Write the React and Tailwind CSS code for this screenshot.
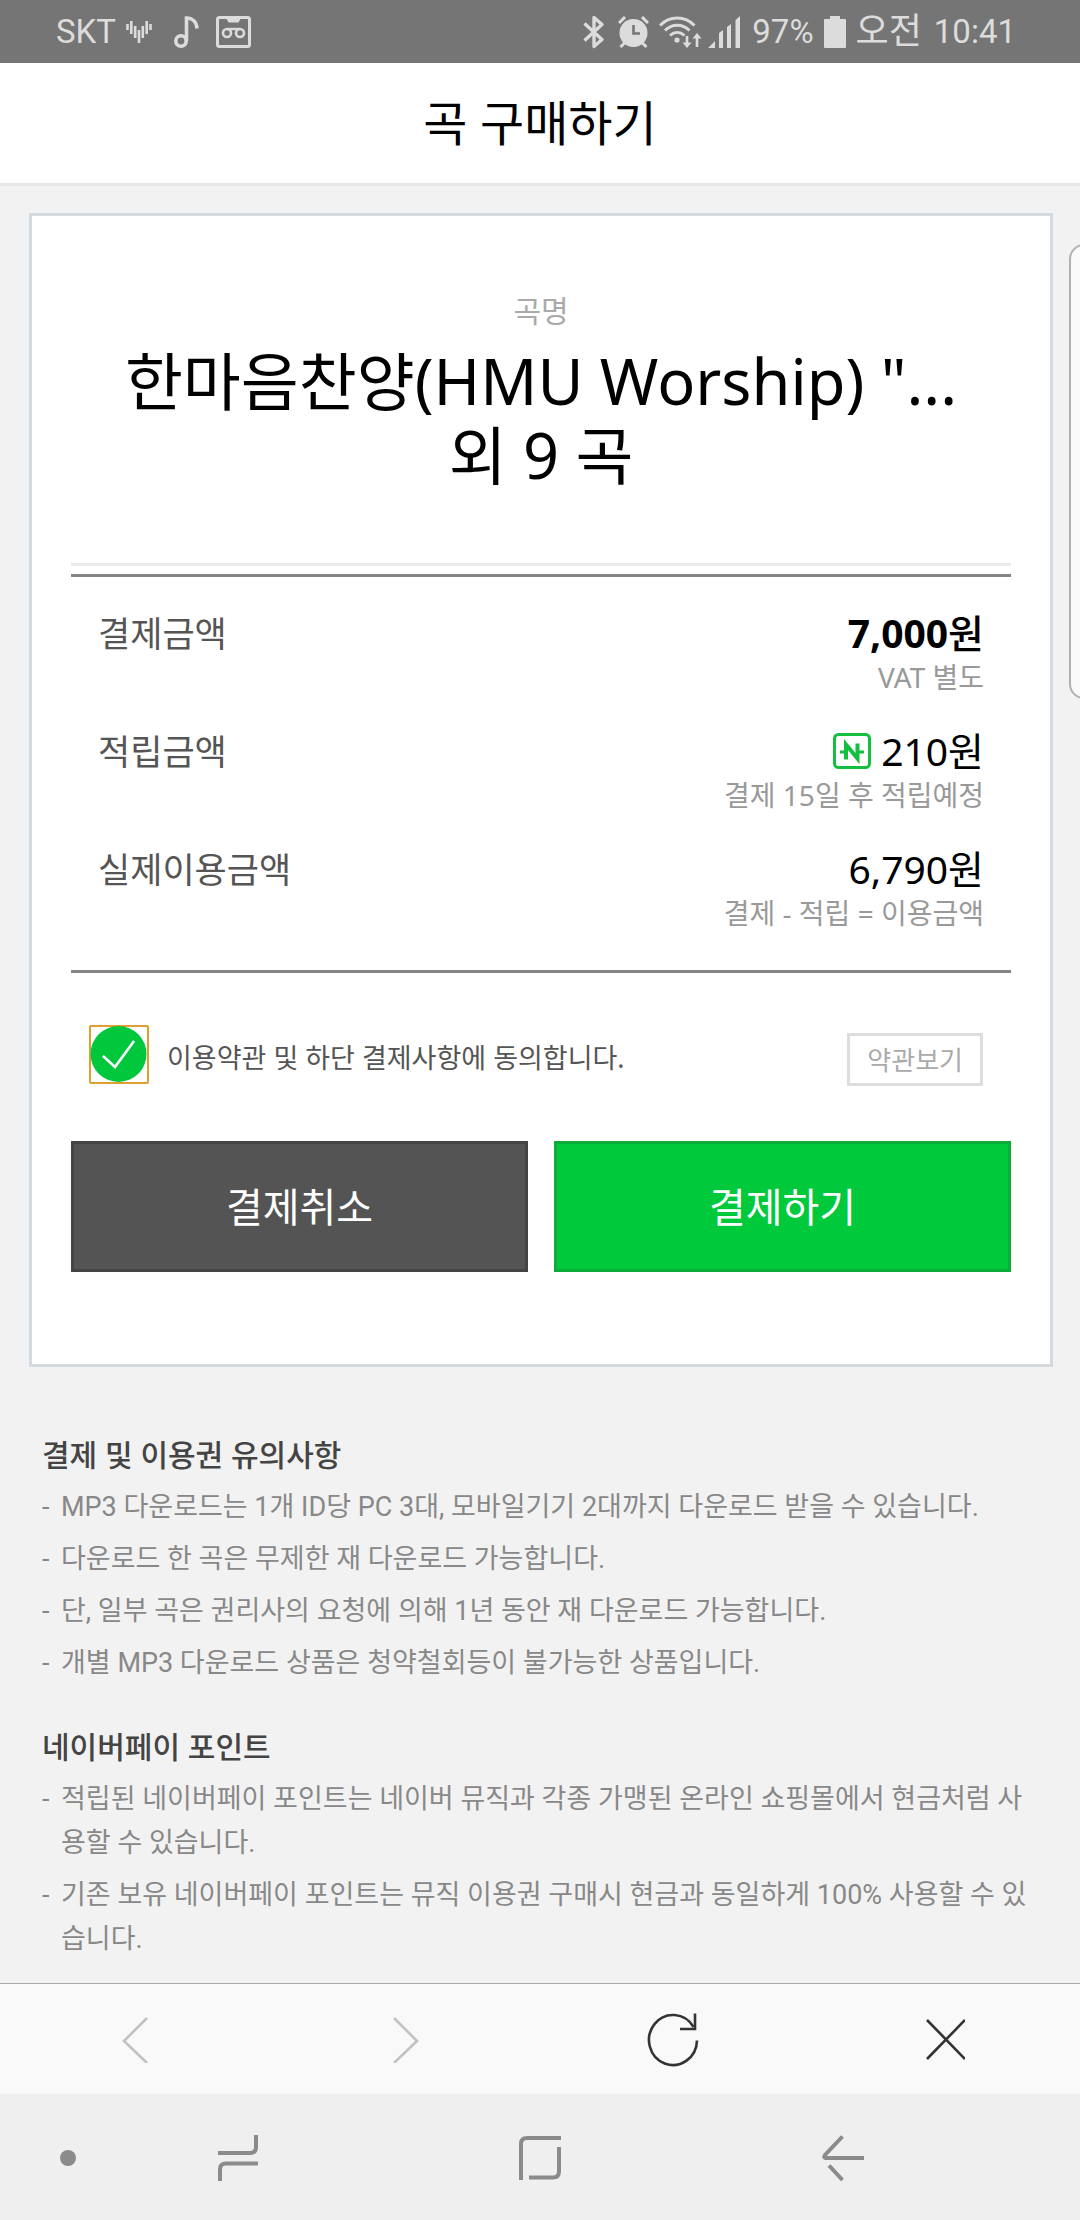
import React, { useState } from 'react';

const paymentRows = [
  { label: '결제금액', amount: '7,000', note: 'VAT 별도', bold: true },
  { label: '적립금액', amount: '210', note: '결제 15일 후 적립예정', pay: true },
  { label: '실제이용금액', amount: '6,790', note: '결제 - 적립 = 이용금액' }
];

const noticeSections = [
  {
    title: '결제 및 이용권 유의사항',
    items: [
      'MP3 다운로드는 1개 ID당 PC 3대, 모바일기기 2대까지 다운로드 받을 수 있습니다.',
      '다운로드 한 곡은 무제한 재 다운로드 가능합니다.',
      '단, 일부 곡은 권리사의 요청에 의해 1년 동안 재 다운로드 가능합니다.',
      '개별 MP3 다운로드 상품은 청약철회등이 불가능한 상품입니다.'
    ]
  },
  {
    title: '네이버페이 포인트',
    items: [
      '적립된 네이버페이 포인트는 네이버 뮤직과 각종 가맹된 온라인 쇼핑몰에서 현금처럼 사용할 수 있습니다.',
      '기존 보유 네이버페이 포인트는 뮤직 이용권 구매시 현금과 동일하게 100% 사용할 수 있습니다.'
    ]
  }
];

const StatusBar = () => (
  <div className="flex h-[63px] items-center justify-between bg-[#757575] pl-14 pr-16 font-['Roboto','Noto_Sans_CJK_KR',sans-serif] text-[33px] leading-none text-[#dcdcdc]">
    <div className="flex items-center">
      <span>SKT</span>
      <svg className="ml-2.5 h-[22px] w-[26px]" viewBox="0 0 26 22" fill="none" stroke="currentColor" strokeWidth="2.6">
        <path d="M1.5 3v6M5.3 0v13M9.2 5v12M13 9v13M16.800 5v12M20.700 0v13M24.500 3v6" />
      </svg>
      <svg className="ml-[22px] h-8 w-[26px]" viewBox="0 0 26 32" fill="none" stroke="currentColor" strokeWidth="3.6">
        <circle cx="7" cy="25" r="5.200" />
        <path d="M12.500 25V2c6 0 10 4 10.500 10.500" />
      </svg>
      <svg className="ml-4 h-8 w-[35px]" viewBox="0 0 35 32" fill="none" stroke="currentColor" strokeWidth="3">
        <rect x="1.500" y="1.500" width="32" height="29" rx="2" />
        <path d="M10 2h15l-2.500 4.500h-10z" fill="currentColor" stroke="none" />
        <circle cx="11" cy="17" r="4" strokeWidth="2.600" />
        <circle cx="24" cy="17" r="4" strokeWidth="2.600" />
        <path d="M11 13h13" strokeWidth="2.400" />
      </svg>
    </div>
    <div className="flex items-center">
      <svg className="h-[34px] w-[22px]" viewBox="0 0 22 34" fill="none" stroke="currentColor" strokeWidth="3.400">
        <path d="M1.500 8.500L19 24.500 11 31.500V2.500l8 7L1.500 25.500" strokeLinejoin="round" />
      </svg>
      <svg className="ml-[13px] h-8 w-[31px]" viewBox="0 0 31 32">
        <circle cx="15.500" cy="17" r="14" fill="currentColor" />
        <path d="M1 7l6-6M30 7l-6-6M2.500 31l5-5M28.500 31l-5-5" stroke="currentColor" strokeWidth="3" />
        <path d="M15.500 9v8.500H22" fill="none" stroke="#757575" strokeWidth="2.600" />
      </svg>
      <svg className="ml-2.5 h-8 w-[43px]" viewBox="0 0 43 32" fill="none" stroke="currentColor" strokeWidth="3">
        <path d="M1 9.500c9.500-10 25-10 34.500 0M6 14.500c7-7 17.500-7 24.500 0M11 19.500c4.500-4 10-4 14.500 0" />
        <circle cx="18" cy="24" r="2.600" fill="currentColor" stroke="none" />
        <path d="M28 20v9M38 31v-10" strokeWidth="2.600" />
        <path d="M23.500 26.500h9L28 32zM33.500 22.500h9L38 17z" fill="currentColor" stroke="none" />
      </svg>
      <svg className="ml-1.5 h-8 w-8" viewBox="0 0 32 32" fill="currentColor">
        <path d="M0 32l7-7v7zM11 32V17l4-3v18zM19 32V11l4-3v24zM27.500 32V4L32 0v32z" />
      </svg>
      <span className="ml-3">97%</span>
      <svg className="ml-2.5 h-8 w-[22px]" viewBox="0 0 22 32" fill="currentColor">
        <path d="M6 0h10v3h5a1 1 0 0 1 1 1v27a1 1 0 0 1-1 1H1a1 1 0 0 1-1-1V4a1 1 0 0 1 1-1h5z" />
      </svg>
      <span className="ml-2.5 text-[36px]">오전</span>
      <span className="ml-3">10:41</span>
    </div>
  </div>
);

const NaverPayIcon = () => (
  <svg className="h-9 w-[38px]" viewBox="0 0 38 36" fill="none" stroke="#13bf3f">
    <rect x="1.500" y="1.500" width="35" height="33" rx="4" strokeWidth="3" />
    <path d="M13 26.500V11.500L24.500 25.500V10.500" strokeWidth="4" />
    <path d="M7 19h6M25 19h6" strokeWidth="3" />
  </svg>
);

const Toolbar = () => (
  <nav className="grid grid-cols-4 border-t border-[#aaaaaa] bg-[#f9f9f9] text-[#333333]">
    <button type="button" aria-label="이전" className="flex h-[110px] items-center justify-center text-[#c2c2c4]">
      <svg className="h-12 w-7" viewBox="0 0 28 48" fill="none" stroke="currentColor" strokeWidth="2.600">
        <path d="M26 3L3 26l23 22" />
      </svg>
    </button>
    <button type="button" aria-label="다음" className="flex h-[110px] items-center justify-center text-[#c2c2c4]">
      <svg className="h-12 w-7" viewBox="0 0 28 48" fill="none" stroke="currentColor" strokeWidth="2.600">
        <path d="M3 3l23 23L3 48" />
      </svg>
    </button>
    <button type="button" aria-label="새로고침" className="flex h-[110px] items-center justify-center">
      <svg className="h-14 w-14" viewBox="0 0 56 56" fill="none" stroke="currentColor" strokeWidth="2.600">
        <path d="M50 29.500A24 25 0 1 1 46.500 16" />
        <path d="M48 2.500v15.500H33" />
      </svg>
    </button>
    <button type="button" aria-label="닫기" className="flex h-[110px] items-center justify-center">
      <svg className="h-[42px] w-10" viewBox="0 0 40 42" fill="none" stroke="currentColor" strokeWidth="2.600">
        <path d="M2 2l38 39M40 2L2 41" />
      </svg>
    </button>
  </nav>
);

const SystemNav = () => (
  <div className="flex h-[126px] items-center bg-[#efefef] pr-[86px] pt-0.5 text-[#8b8b8b]">
    <div className="flex w-[87px] justify-end pr-[11px]">
      <span className="h-4 w-4 rounded-full bg-[#8b8b8b]" />
    </div>
    <button type="button" aria-label="최근 앱" className="flex flex-1 justify-center">
      <svg className="h-[46px] w-[42px]" viewBox="0 0 42 46" fill="none" stroke="currentColor" strokeWidth="4">
        <path d="M1 18h32q6 0 6-6V0M41 28.500H9q-6 0-6 6V46" />
      </svg>
    </button>
    <button type="button" aria-label="홈" className="flex flex-1 justify-center">
      <svg className="h-11 w-[42px]" viewBox="0 0 42 44" fill="none" stroke="currentColor" strokeWidth="4">
        <path d="M2 44V8q0-6 6-6h34M10 41.500h24q6 0 6-6V11" />
      </svg>
    </button>
    <button type="button" aria-label="뒤로" className="flex flex-1 justify-center">
      <svg className="h-[46px] w-[42px]" viewBox="0 0 42 46" fill="none" stroke="currentColor" strokeWidth="4">
        <path d="M20.500 1.500L3 20q-2 3 1.500 3H42M7 30.500L20.500 45" />
      </svg>
    </button>
  </div>
);

const App = () => {
  const [agreed, setAgreed] = useState(true);

  return (
    <div className="relative flex min-h-screen flex-col overflow-hidden bg-[#f2f2f2] font-['Noto_Sans','Noto_Sans_CJK_KR',sans-serif] text-black">
      <StatusBar />

      <header className="flex h-[123px] items-center justify-center border-b-3 border-[#e6e6e6] bg-white">
        <h1 className="text-[48px] leading-none">곡 구매하기</h1>
      </header>

      {/* Payment card */}
      <main className="ml-[29px] mr-[27px] mt-[27px] border-3 border-[#d5dae1] bg-white px-[39px] pb-[92px] pt-[75px]">
        <div className="border-b-3 border-[#ebebeb] pb-[71px] text-center">
          <p className="text-[30px] leading-10 text-[#aaaaaa]">곡명</p>
          <h2 className="mt-[13px] text-[63px] leading-[74px]">
            한마음찬양(HMU Worship) "...
            <br />
            외 9 곡
          </h2>
        </div>

        <dl className="mt-2 flex flex-col gap-[30px] border-y-3 border-[#858585] px-[27px] pb-[37px] pt-8">
          {paymentRows.map((row) => (
            <div key={row.label} className="flex justify-between">
              <dt className="text-[35px] leading-[50px] text-[#555555]">{row.label}</dt>
              <dd className="text-right">
                <div className="flex items-center justify-end gap-2.5 text-[39px] leading-[48px]">
                  {row.pay && <NaverPayIcon />}
                  <span className={row.bold ? 'font-bold' : ''}>
                    {row.amount}
                    <span className={row.bold ? 'font-medium' : ''}>원</span>
                  </span>
                </div>
                <div className="text-[28px] leading-10 text-[#999999]">{row.note}</div>
              </dd>
            </div>
          ))}
        </dl>

        <div className="mt-[52px] flex items-end justify-between pl-[18px] pr-7">
          <label className="mb-0.5 flex items-center gap-[18px] text-[27px] leading-9 text-[#555555]">
            <span className="grid h-[59px] w-[60px]">
              <input
                type="checkbox"
                checked={agreed}
                onChange={(e) => setAgreed(e.target.checked)}
                className="col-start-1 row-start-1 h-full w-full appearance-none rounded-[2px] border-2 border-[#e0a030]"
              />
              {agreed && (
                <svg className="pointer-events-none col-start-1 row-start-1 h-full w-full" viewBox="0 0 60 59" fill="none">
                  <circle cx="29.500" cy="29" r="28" fill="#00c73c" />
                  <path d="M14 31l12 11 19-26" stroke="#ffffff" strokeWidth="2.600" />
                </svg>
              )}
            </span>
            <span className="pt-1.5">이용약관 및 하단 결제사항에 동의합니다.</span>
          </label>
          <button type="button" className="border-3 border-[#dddddd] px-[17px] pb-[5px] pt-1.5 text-[26px] leading-9 text-[#aaaaaa]">
            약관보기
          </button>
        </div>

        <div className="mt-[55px] grid grid-cols-2 gap-[26px] text-[40px] text-white text-shadow-[0_2px_3px_rgba(0,0,0,0.3)]">
          <button type="button" className="h-[131px] border-3 border-[#444444] bg-[#545454]">
            결제취소
          </button>
          <button type="button" className="h-[131px] border-3 border-[#0dac3a] bg-[#00c93c]">
            결제하기
          </button>
        </div>
      </main>

      {/* Notices */}
      <div className="mt-[66px] flex flex-1 flex-col gap-10 pl-[42px] pr-[50px]">
        {noticeSections.map((section) => (
          <section key={section.title}>
            <h3 className="text-[30px] font-medium leading-[44px] text-[#444444]">{section.title}</h3>
            <ul className="mt-2 flex flex-col gap-2 font-['Roboto','Noto_Sans_CJK_KR',sans-serif] text-[27px] leading-[44px] text-[#888888]">
              {section.items.map((item) => (
                <li key={item} className="flex">
                  <span className="w-[19px] shrink-0">-</span>
                  <span>{item}</span>
                </li>
              ))}
            </ul>
          </section>
        ))}
      </div>

      <Toolbar />
      <SystemNav />

      {/* Edge panel handle, partly off screen */}
      <div className="absolute -right-5 top-[244px] h-[455px] w-[31px] rounded-[15px] border-2 border-[#b0b0b0] bg-[#fafafa]" />
    </div>
  );
};

export default App;
